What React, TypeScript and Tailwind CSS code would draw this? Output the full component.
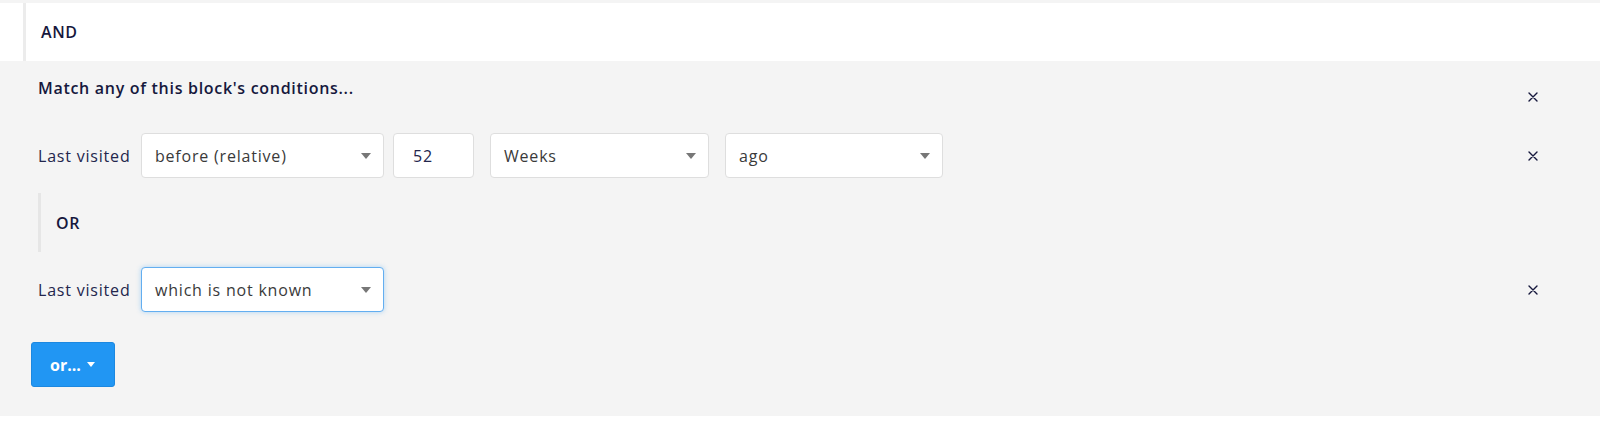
import React from 'react';

const font = { fontFamily: '"Open Sans", "Noto Sans", sans-serif' };

function CloseX() {
    return (
        <button type="button" className="w-[12px] h-[12px] flex items-center justify-center text-[#16183d]">
            <svg width="10" height="10" viewBox="0 0 10 10" fill="none" stroke="currentColor" strokeWidth="1.4" strokeLinecap="round">
                <path d="M1 1 L9 9 M9 1 L1 9" />
            </svg>
        </button>
    );
}

function Caret({ className = '' }: { className?: string }) {
    return (
        <svg width="10" height="6" viewBox="0 0 10 6" className={className}>
            <path d="M0 0 H10 L5 6 Z" fill="currentColor" />
        </svg>
    );
}

function Select({ value, width, focused }: { value: string; width: string; focused?: boolean }) {
    return (
        <div
            className={`${width} h-[45px] bg-white rounded-[4px] flex items-center justify-between pl-[13px] pr-[12px] text-[16px] tracking-[0.8px] text-[#3a3a3a] border ${
                focused ? 'border-[#63aef0] shadow-[0_0_5px_rgba(33,150,243,0.35)]' : 'border-[#dedede]'
            }`}
        >
            <span>{value}</span>
            <Caret className="text-[#777]" />
        </div>
    );
}

export default function App() {
    return (
        <div style={font} className="w-[1600px] text-[#16183d]">
            <div className="bg-[#f4f4f4] pt-[3px]">
                <div className="bg-white h-[58px] pl-[23px]">
                    <div className="h-full border-l-[3px] border-[#ececec] pl-[15px] flex items-center text-[16px] font-semibold tracking-[0.6px]">
                        AND
                    </div>
                </div>
            </div>

            <div className="bg-[#f4f4f4] pl-[31px] pr-[61px] pt-[16px] pb-[29px]">
                <div className="flex items-start justify-between pl-[7px]">
                    <div className="text-[16px] leading-[22px] font-semibold tracking-[0.7px]">Match any of this block's conditions...</div>
                    <div className="mt-[14px]"><CloseX /></div>
                </div>

                <div className="mt-[30px] flex items-center justify-between pl-[7px]">
                    <div className="flex items-center">
                        <span className="text-[16px] tracking-[0.8px] w-[103px] text-[#23264d]">Last visited</span>
                        <Select value="before (relative)" width="w-[243px]" />
                        <div className="ml-[9px] w-[81px] h-[45px] bg-white border border-[#dedede] rounded-[4px] flex items-center pl-[19px] text-[16px] tracking-[0.8px] text-[#23264d]">
                            52
                        </div>
                        <div className="ml-[16px]"><Select value="Weeks" width="w-[219px]" /></div>
                        <div className="ml-[16px]"><Select value="ago" width="w-[218px]" /></div>
                    </div>
                    <CloseX />
                </div>

                <div className="mt-[15px] ml-[7px] border-l-[3px] border-[#e6e6e6] h-[59px] pl-[15px] flex items-center text-[16px] font-semibold tracking-[0.6px]">
                    OR
                </div>

                <div className="mt-[15px] flex items-center justify-between pl-[7px]">
                    <div className="flex items-center">
                        <span className="text-[16px] tracking-[0.8px] w-[103px] text-[#23264d]">Last visited</span>
                        <Select value="which is not known" width="w-[243px]" focused />
                    </div>
                    <CloseX />
                </div>

                <button
                    type="button"
                    className="mt-[30px] w-[84px] h-[45px] bg-[#2196f3] border border-[#1c88e0] rounded-[3px] text-white text-[16px] font-bold flex items-center pl-[18px] gap-[6px]"
                >
                    or...
                    <Caret className="text-white w-[8px] h-[5px]" />
                </button>
            </div>
        </div>
    );
}
